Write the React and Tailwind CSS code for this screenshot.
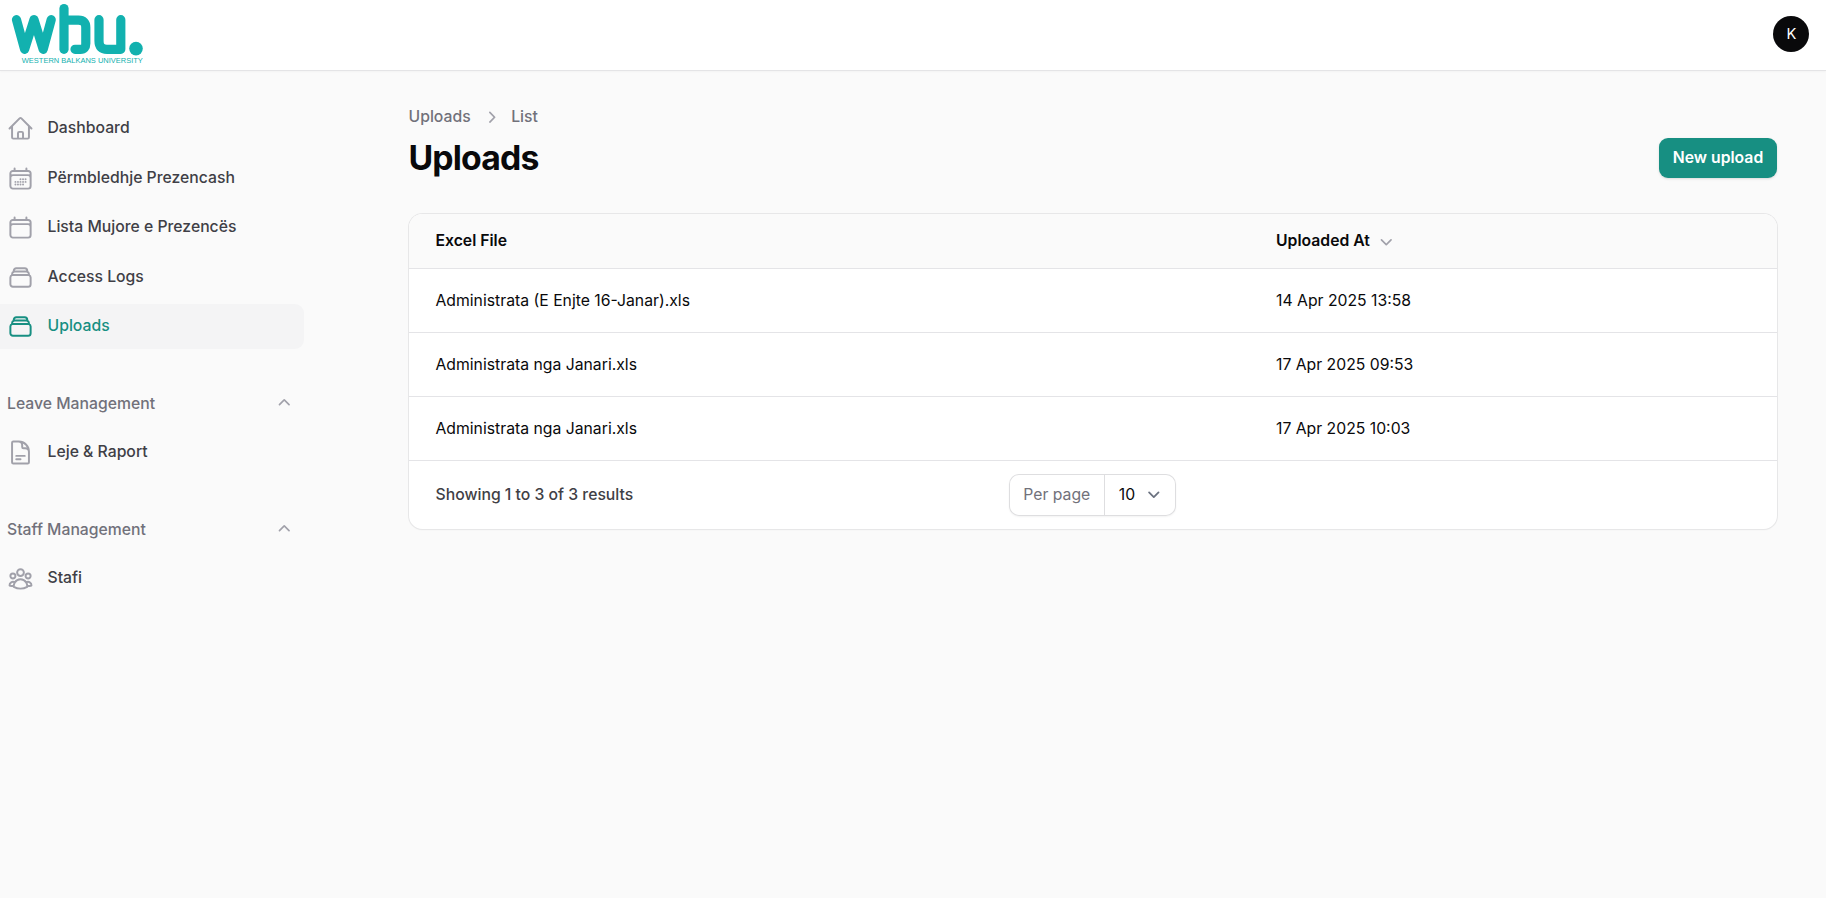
import React from "react";
import {
  HiOutlineHome,
  HiOutlineCalendarDays,
  HiOutlineCalendar,
  HiOutlineRectangleStack,
  HiOutlineDocumentText,
  HiOutlineUserGroup,
  HiMiniChevronUp,
  HiMiniChevronDown,
  HiMiniChevronRight,
} from "react-icons/hi2";

const mainItems = [
  { label: "Dashboard", Icon: HiOutlineHome },
  { label: "Përmbledhje Prezencash", Icon: HiOutlineCalendarDays },
  { label: "Lista Mujore e Prezencës", Icon: HiOutlineCalendar },
  { label: "Access Logs", Icon: HiOutlineRectangleStack },
  { label: "Uploads", Icon: HiOutlineRectangleStack, active: true },
];

const groups = [
  { title: "Leave Management", items: [{ label: "Leje & Raport", Icon: HiOutlineDocumentText }] },
  { title: "Staff Management", items: [{ label: "Stafi", Icon: HiOutlineUserGroup }] },
];

const rows = [
  ["Administrata (E Enjte 16-Janar).xls", "14 Apr 2025 13:58"],
  ["Administrata nga Janari.xls", "17 Apr 2025 09:53"],
  ["Administrata nga Janari.xls", "17 Apr 2025 10:03"],
];

function Logo() {
  return (
    <svg className="ml-[11px] h-[62px] w-[134px]" viewBox="0 0 134 62" fill="none">
      <g stroke="#12b1af" strokeWidth="9.2" strokeLinecap="round" strokeLinejoin="round">
        <path d="M5.5 16.7 13.6 46.3 23 16.7 32.2 46.3 40.2 16.7" />
        <path d="M53 5.5V46.3" />
        <path d="M54 17.2H67.5Q74.8 17.2 74.8 24.5V40.5Q74.8 46.3 69.5 46.3H64" />
        <path d="M88 16.7V38Q88 46.3 96 46.3H109.8V16.7" />
      </g>
      <circle cx="125" cy="45.6" r="6.8" fill="#12b1af" />
      <text
        x="10.8"
        y="59.9"
        fill="#12b1af"
        fontSize="7.2"
        fontFamily="Liberation Sans, sans-serif"
        textLength="121"
        lengthAdjust="spacingAndGlyphs"
      >
        WESTERN BALKANS UNIVERSITY
      </text>
    </svg>
  );
}

function NavItem({ label, Icon, active }) {
  return (
    <li
      className={
        "flex h-[45px] items-center gap-[13.5px] rounded-r-[9px] pl-[7px] text-[15.75px] font-medium " +
        (active ? "bg-[#f4f4f5] text-[#178f82]" : "text-[#3f3f46]")
      }
    >
      <Icon strokeWidth={1.75} className={"mt-px size-[27px] shrink-0 " + (active ? "text-[#178f82]" : "text-[#a1a1aa]")} />
      <span>{label}</span>
    </li>
  );
}

export default function App() {
  return (
    <div className="flex h-[898px] w-[1826px] flex-col overflow-hidden bg-[#fafafa] font-['Inter',sans-serif] text-[15.75px] text-[#09090b]">
      <header className="flex h-[70px] shrink-0 items-start justify-between bg-white shadow-[0_1px_0_#e4e4e6,0_2px_2px_rgba(0,0,0,0.03)]">
        <div className="pt-[3px]">
          <Logo />
        </div>
        <div className="mt-4 mr-[17px] flex size-9 items-center justify-center rounded-full bg-[#09090b] pt-px pl-px text-[14.7px] text-white">K</div>
      </header>

      <div className="flex min-h-0 flex-1">
        <aside className="flex w-[304px] shrink-0 flex-col gap-[31.5px] pt-[35.5px]">
          <ul className="flex flex-col gap-[4.5px]">
            {mainItems.map((item) => (
              <NavItem key={item.label} {...item} />
            ))}
          </ul>
          {groups.map((group) => (
            <div key={group.title} className="flex flex-col gap-[4.5px]">
              <div className="flex h-[45px] items-center justify-between pt-[2px] pr-[9px] pl-[7px] font-medium text-[#71717a]">
                <span>{group.title}</span>
                <HiMiniChevronUp className="size-[22.5px] text-[#a1a1aa]" />
              </div>
              <ul>
                {group.items.map((item) => (
                  <NavItem key={item.label} {...item} />
                ))}
              </ul>
            </div>
          ))}
        </aside>

        <main className="ml-[104.5px] w-[1368.5px] pt-[36px]">
          <div className="flex items-center justify-between">
            <div>
              <nav className="flex h-[22px] items-center font-medium text-[#71717a]">
                <span>Uploads</span>
                <HiMiniChevronRight className="mx-[9px] size-[22.5px] text-[#a1a1aa]" />
                <span>List</span>
              </nav>
              <h1 className="mt-[10px] text-[33.75px] leading-[40px] font-bold tracking-[-0.025em]">Uploads</h1>
            </div>
            <button className="mt-[32px] h-10 w-[118px] rounded-[9px] bg-[#178f82] font-semibold text-white shadow-sm">New upload</button>
          </div>

          <section className="mt-[36px] overflow-hidden rounded-[13.5px] bg-white shadow-[0_1px_2px_rgba(0,0,0,0.05)] ring-1 ring-[#e7e7e8]">
            <table className="w-full table-fixed border-collapse text-left">
              <colgroup>
                <col className="w-[840.5px]" />
                <col />
              </colgroup>
              <thead>
                <tr className="h-[54px] border-b border-[#e4e4e7] bg-[#fafafa]">
                  <th className="pt-px pl-[27px] font-semibold">Excel File</th>
                  <th className="pt-px pl-[27px] font-semibold">
                    <span className="flex items-center gap-[5px]">
                      Uploaded At
                      <HiMiniChevronDown className="size-[22.5px] text-[#a1a1aa]" />
                    </span>
                  </th>
                </tr>
              </thead>
              <tbody>
                {rows.map(([file, date], i) => (
                  <tr key={i} className="h-[64px] border-b border-[#e4e4e7]">
                    <td className="pt-[2px] pl-[27px]">{file}</td>
                    <td className="pt-[2px] pl-[27px]">{date}</td>
                  </tr>
                ))}
              </tbody>
            </table>
            <div className="grid h-[68px] grid-cols-[1fr_auto_1fr] items-center px-[27px]">
              <span className="font-medium text-[#3f3f46]">Showing 1 to 3 of 3 results</span>
              <div className="flex h-[42px] w-[167px] items-center rounded-[10px] shadow-[0_1px_2px_rgba(0,0,0,0.05)] ring-1 ring-[#dedee0] ring-inset">
                <span className="flex h-full w-[96px] items-center justify-center border-r border-[#dedee0] text-[#71717a]">Per page</span>
                <span className="flex flex-1 items-center justify-between pr-[11px] pl-[13.5px]">
                  10
                  <svg className="size-[23.6px] text-[#6b7280]" viewBox="0 0 20 20" fill="none" stroke="currentColor" strokeWidth="1.5" strokeLinecap="round" strokeLinejoin="round">
                    <path d="m6 8 4 4 4-4" />
                  </svg>
                </span>
              </div>
            </div>
          </section>
        </main>
      </div>
    </div>
  );
}
